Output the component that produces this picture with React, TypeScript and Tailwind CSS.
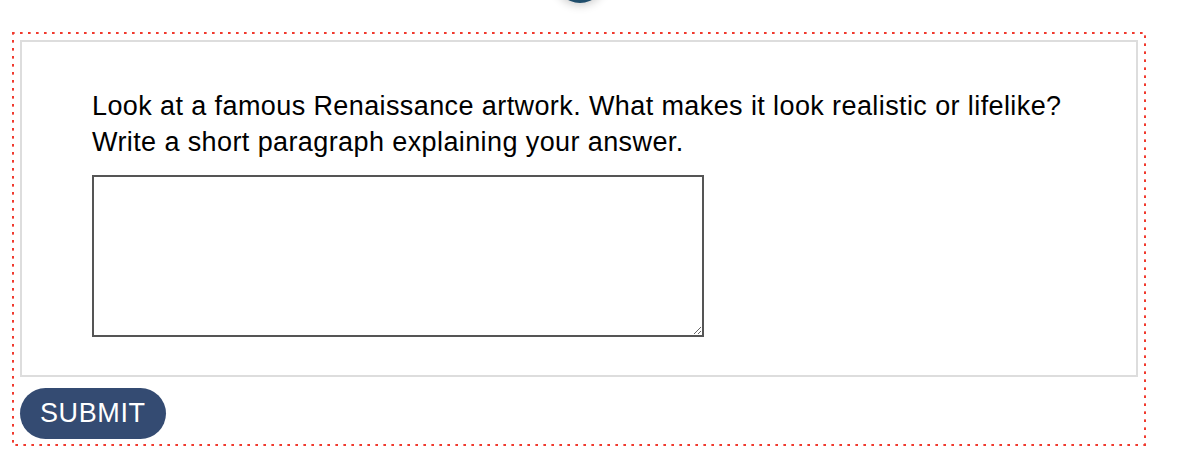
export default function App() {
  return (
    <div className="relative h-[468px] w-[1188px] bg-white pt-8 pl-3 font-['Liberation_Sans',Arial,sans-serif]">
      {/* bottom of a step marker above the frame */}
      <div className="absolute left-[555px] top-[-47px] h-[50px] w-[50px] rounded-full bg-[#1f4d6b] shadow-[0_2px_10px_rgba(0,0,0,0.22)]" />

      {/* dotted frame: round dots every 8px */}
      <div className="h-[414px] w-[1134px] bg-[radial-gradient(circle_at_1px_1px,#f03a2e_1.4px,transparent_1.9px),radial-gradient(circle_at_7px_7px,#f03a2e_1.4px,transparent_1.9px)] bg-[length:8px_8px] bg-[position:left_top,right_bottom] p-[2px]">
        <div className="h-full bg-white px-1.5 pt-1.5">
          <div className="h-[337px] border-2 border-[#dddddd] pt-[46px] pl-[70px]">
            <p className="text-[27px] leading-[36px] tracking-[0.4px] text-black">
              Look at a famous Renaissance artwork. What makes it look realistic or lifelike?
              <br />
              Write a short paragraph explaining your answer.
            </p>
            <textarea className="mt-[15px] block h-[162px] w-[612px] border-2 border-[#555555] bg-white outline-none" />
          </div>
          <button className="mt-[11px] flex h-[51px] items-center rounded-full bg-[#344b72] px-5 text-[27px] tracking-[0.6px] text-white">
            SUBMIT
          </button>
        </div>
      </div>
    </div>
  );
}
